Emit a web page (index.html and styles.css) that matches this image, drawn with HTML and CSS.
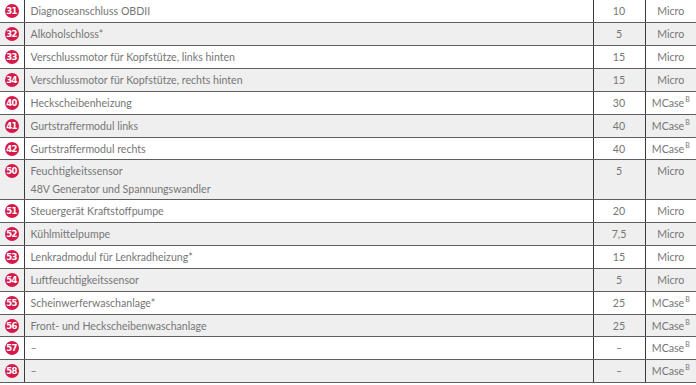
FILE: index.html
```html
<!DOCTYPE html>
<html lang="de">
<head>
  <meta charset="UTF-8" />
  <title>Sicherungen</title>
  <link rel="stylesheet" href="styles.css">
</head>
<body>
  <table class="fuses">
    <colgroup>
      <col class="col-pos">
      <col class="col-func">
      <col class="col-amp">
      <col class="col-type">
    </colgroup>
    <tbody>
      <tr>
        <td class="pos"><span class="badge">31</span></td>
        <td class="func">Diagnoseanschluss OBDII</td>
        <td class="amp">10</td>
        <td class="type">Micro</td>
      </tr>
      <tr>
        <td class="pos"><span class="badge">32</span></td>
        <td class="func">Alkoholschloss*</td>
        <td class="amp">5</td>
        <td class="type">Micro</td>
      </tr>
      <tr>
        <td class="pos"><span class="badge">33</span></td>
        <td class="func">Verschlussmotor für Kopfstütze, links hinten</td>
        <td class="amp">15</td>
        <td class="type">Micro</td>
      </tr>
      <tr>
        <td class="pos"><span class="badge">34</span></td>
        <td class="func">Verschlussmotor für Kopfstütze, rechts hinten</td>
        <td class="amp">15</td>
        <td class="type">Micro</td>
      </tr>
      <tr>
        <td class="pos"><span class="badge">40</span></td>
        <td class="func">Heckscheibenheizung</td>
        <td class="amp">30</td>
        <td class="type">MCase<sup>B</sup></td>
      </tr>
      <tr>
        <td class="pos"><span class="badge">41</span></td>
        <td class="func">Gurtstraffermodul links</td>
        <td class="amp">40</td>
        <td class="type">MCase<sup>B</sup></td>
      </tr>
      <tr>
        <td class="pos"><span class="badge">42</span></td>
        <td class="func">Gurtstraffermodul rechts</td>
        <td class="amp">40</td>
        <td class="type">MCase<sup>B</sup></td>
      </tr>
      <tr class="double">
        <td class="pos"><span class="badge">50</span></td>
        <td class="func">Feuchtigkeitssensor<br>48V Generator und Spannungswandler</td>
        <td class="amp">5</td>
        <td class="type">Micro</td>
      </tr>
      <tr>
        <td class="pos"><span class="badge">51</span></td>
        <td class="func">Steuergerät Kraftstoffpumpe</td>
        <td class="amp">20</td>
        <td class="type">Micro</td>
      </tr>
      <tr>
        <td class="pos"><span class="badge">52</span></td>
        <td class="func">Kühlmittelpumpe</td>
        <td class="amp">7,5</td>
        <td class="type">Micro</td>
      </tr>
      <tr>
        <td class="pos"><span class="badge">53</span></td>
        <td class="func">Lenkradmodul für Lenkradheizung*</td>
        <td class="amp">15</td>
        <td class="type">Micro</td>
      </tr>
      <tr>
        <td class="pos"><span class="badge">54</span></td>
        <td class="func">Luftfeuchtigkeitssensor</td>
        <td class="amp">5</td>
        <td class="type">Micro</td>
      </tr>
      <tr>
        <td class="pos"><span class="badge">55</span></td>
        <td class="func">Scheinwerferwaschanlage*</td>
        <td class="amp">25</td>
        <td class="type">MCase<sup>B</sup></td>
      </tr>
      <tr>
        <td class="pos"><span class="badge">56</span></td>
        <td class="func">Front- und Heckscheibenwaschanlage</td>
        <td class="amp">25</td>
        <td class="type">MCase<sup>B</sup></td>
      </tr>
      <tr>
        <td class="pos"><span class="badge">57</span></td>
        <td class="func">–</td>
        <td class="amp">–</td>
        <td class="type">MCase<sup>B</sup></td>
      </tr>
      <tr>
        <td class="pos"><span class="badge">58</span></td>
        <td class="func">–</td>
        <td class="amp">–</td>
        <td class="type">MCase<sup>B</sup></td>
      </tr>
    </tbody>
  </table>
</body>
</html>
```
FILE: styles.css
```css
/*
  Reset and base font
*/
* {
  box-sizing: border-box;
  margin: 0;
  padding: 0;
}
body {
  background: #ffffff;
  font-family: "Lato", "Open Sans", sans-serif;
  color: #767676;
  width: 696px;
  overflow: hidden;
}
/*
  Fuse table
*/
.fuses {
  width: 696px;
  border-collapse: collapse;
  table-layout: fixed;
  font-size: 10.6px;
}
.col-pos { width: 24px; }
.col-amp { width: 52px; }
.col-type { width: 51px; }

.fuses tr {
  height: 22.85px;
}
.fuses tr.double {
  height: 40px;
}
.fuses tr:nth-child(even) td {
  background-color: #efefef;
}
.fuses td {
  border-bottom: 1px solid #5e5e5e;
  border-left: 1px solid #3a3a3a;
  vertical-align: top;
  line-height: 18px;
  padding-top: 2px;
  white-space: nowrap;
}
.fuses td:first-child {
  border-left: none;
}
/*
  Position badge
*/
.pos {
  text-align: center;
}
.badge {
  display: inline-block;
  width: 14px;
  height: 14px;
  margin-top: 2px;
  border-radius: 50%;
  background-color: #d5194a;
  color: #ffffff;
  font-family: "DejaVu Sans Condensed", "DejaVu Sans", sans-serif;
  font-weight: bold;
  font-size: 9.5px;
  line-height: 14px;
  letter-spacing: -0.7px;
  text-indent: -0.7px;
  vertical-align: top;
}
.func {
  padding-left: 6px;
}
.amp,
.type {
  text-align: center;
}
.type sup {
  font-size: 7px;
  line-height: 0;
  vertical-align: 5px;
  margin-left: 1px;
}
```
